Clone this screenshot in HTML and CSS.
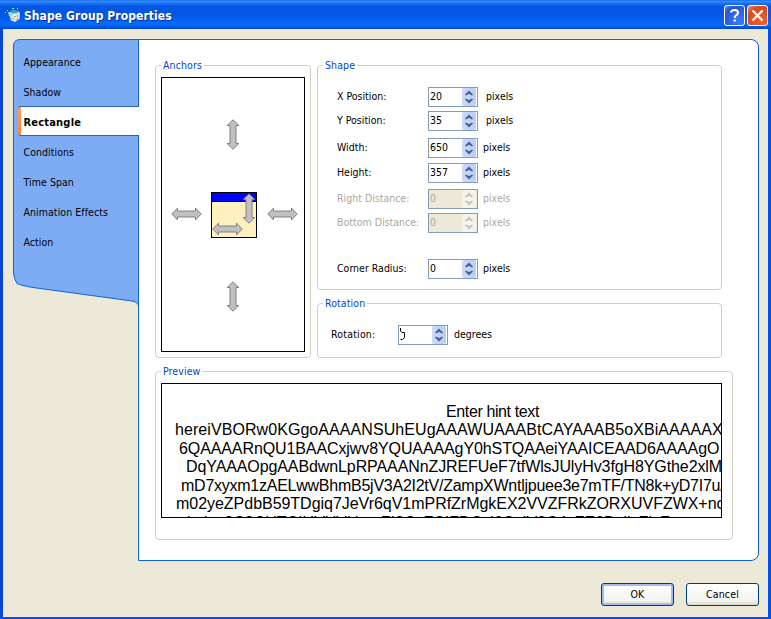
FILE: index.html
```html
<!DOCTYPE html>
<html lang="en">
<head>
<meta charset="utf-8">
<title>Shape Group Properties</title>
<link rel="stylesheet" href="styles.css">
</head>
<body>
<svg width="0" height="0" class="defs">
  <defs>
    <symbol id="arrow-v" viewBox="0 0 14 31"><path d="M7 .8 12.9 6.5H10V24.5H12.9L7 30.2 1.1 24.5H4V6.5H1.1Z" fill="#c0c0c0" stroke="#808080"/></symbol>
    <symbol id="arrow-h" viewBox="0 0 31 14"><path d="M.8 7 6.5 1.1V4H24.5V1.1L30.2 7 24.5 12.9V10H6.5V12.9Z" fill="#c0c0c0" stroke="#808080"/></symbol>
    <symbol id="spin" viewBox="0 0 14 18"><path d="M7 2.500 11 6.500 10 7.500 9 7 7 5.800 5 7 4 7.500 3 6.500ZM7 15.500 11 11.500 10 10.500 9 11 7 12.200 5 11 4 10.500 3 11.500Z" fill="currentColor"/></symbol>
  </defs>
</svg>
<div class="window">
  <header class="titlebar">
    <svg class="app-icon" width="16" height="16" viewBox="0 0 16 16"><path d="M4 5 9 6 14 4 15 7 14.500 12 10 15 6 13.500 5 10Z" fill="#e2e2e0"/><path d="M5 5 7 3H11L14 4.500 11 7 6 6.500Z" fill="#2ea6cc"/><path d="M3 5H6L8 7 6 10 4 9Z" fill="#8be0f2"/><path d="M8 7 12 6 9 9Z" fill="#fff"/><path d="M9 9h2v1H9zM12 8h1v2h-1zM7 11h2v1H7zM11 12h2v1h-2z" fill="#a4a6a6"/><path d="M0 5h1v1H0zM2 3h1v1H2zM7 1h2v1H7zM12 1h1v1h-1zM4 8h1v1H4z" fill="#b8dccf"/></svg>
    <h1>Shape Group Properties</h1>
    <button class="cap help"><svg width="21" height="21" viewBox="0 0 21 21"><path d="M7 7.500Q7.300 5 10.500 5 14 5 14 7.700 14 9.200 12 10.400 10.700 11.200 10.700 13" fill="none" stroke="#fff" stroke-width="2"/><path d="M9.600 14.500h2.200v2H9.600z" fill="#fff"/></svg></button>
    <button class="cap close"><svg width="21" height="21" viewBox="0 0 21 21"><path d="M5.500 5.500 15.500 15.500M15.500 5.500 5.500 15.500" stroke="#fff" stroke-width="2.300"/></svg></button>
  </header>
  <main>
    <nav>
      <svg class="nav-bg" width="126" height="268" viewBox="0 0 126 268"><path d="M125.500.5H6.500Q.5 1 .5 7V234Q1 240 4 244.500 8 246.500 20 248.500L119 262Q125 263 125.500 267Z" fill="#7eacf4" stroke="#0e62dc"/></svg>
      <a>Appearance</a><a>Shadow</a><a class="current">Rectangle</a><a>Conditions</a><a>Time Span</a><a>Animation Effects</a><a>Action</a>
    </nav>
    <section class="panel">
      <div class="top">
        <div class="group"><span class="legend">Anchors</span>
          <div class="canvas">
            <svg class="arrow n" width="14" height="31"><use href="#arrow-v"/></svg>
            <svg class="arrow w" width="31" height="14"><use href="#arrow-h"/></svg>
            <div class="shape"><div class="shape-bar"></div>
              <svg class="arrow iv" width="14" height="31"><use href="#arrow-v"/></svg>
              <svg class="arrow ih" width="31" height="14"><use href="#arrow-h"/></svg>
            </div>
            <svg class="arrow e" width="31" height="14"><use href="#arrow-h"/></svg>
            <svg class="arrow s" width="14" height="31"><use href="#arrow-v"/></svg>
          </div>
        </div>
        <div class="right">
          <div class="group fields"><span class="legend">Shape</span>
            <div class="row wide"><label>X Position:</label><div class="num"><span>20</span><svg class="spin"><use href="#spin"/></svg></div><em>pixels</em></div>
            <div class="row wide g4"><label>Y Position:</label><div class="num"><span>35</span><svg class="spin"><use href="#spin"/></svg></div><em>pixels</em></div>
            <div class="row g7"><label>Width:</label><div class="num"><span>650</span><svg class="spin"><use href="#spin"/></svg></div><em>pixels</em></div>
            <div class="row g5"><label>Height:</label><div class="num"><span>357</span><svg class="spin"><use href="#spin"/></svg></div><em>pixels</em></div>
            <div class="row g6 off"><label>Right Distance:</label><div class="num"><span>0</span><svg class="spin"><use href="#spin"/></svg></div><em>pixels</em></div>
            <div class="row g4 off"><label>Bottom Distance:</label><div class="num"><span>0</span><svg class="spin"><use href="#spin"/></svg></div><em>pixels</em></div>
            <div class="row g26"><label>Corner Radius:</label><div class="num"><span>0</span><svg class="spin"><use href="#spin"/></svg></div><em>pixels</em></div>
          </div>
          <div class="group rotation"><span class="legend">Rotation</span>
            <div class="row"><label>Rotation:</label><div class="num"><svg class="dial" width="8" height="14" viewBox="0 0 8 14"><path d="M.5 0V3L2 4.500H4.500V9.500L2.500 11.500H.5" fill="none" stroke="#000"/></svg><svg class="spin"><use href="#spin"/></svg></div><em>degrees</em></div>
          </div>
        </div>
      </div>
      <div class="group preview"><span class="legend">Preview</span>
        <div class="paper">
          <p class="l0">Enter hint text</p>
          <p class="l1">hereiVBORw0KGgoAAAANSUhEUgAAAWUAAABtCAYAAAB5oXBiAAAAAX</p>
          <p class="l2">6QAAAARnQU1BAACxjwv8YQUAAAAgY0hSTQAAeiYAAICEAAD6AAAAgO</p>
          <p class="l3">DqYAAAOpgAABdwnLpRPAAANnZJREFUeF7tfWlsJUlyHv3fgH8YGthe2xlMW</p>
          <p class="l4">mD7xyxm1zAELwwBhmB5jV3A2I2tV/ZampXWntljpuee3e7mTF/TN8k+yD7I7u/</p>
          <p class="l5">m02yeZPdbB59TDgiq7JeVr6qV1mPRfZrMgkEX2VVZFRkZORXUVFZWX+nc</p>
          <p class="l6">lyrley2C8CUTCIUVUVUyreFI2CcFCIFDCyl6CyIV8C4yFE6DyllyFlyF</p>
        </div>
      </div>
    </section>
  </main>
  <footer><button class="btn primary">OK</button><button class="btn">Cancel</button></footer>
</div>
</body>
</html>
```
FILE: styles.css
```css
* { box-sizing: border-box; margin: 0; }
body { width: 771px; height: 619px; overflow: hidden; background: #ece9d8; font-family: "DejaVu Sans Condensed", "DejaVu Sans", sans-serif; font-stretch: condensed; font-size: 10.5px; color: #000; }
.defs { position: absolute; }
.window { width: 771px; height: 619px; border: 3px solid #0050ea; border-top: 0; border-bottom-width: 2px; border-left-color: #0747dd; display: flex; flex-direction: column; }
.titlebar { flex: none; height: 29px; margin: 0 -3px; padding: 1px 3px 0 5px; display: flex; align-items: center; background: linear-gradient(#0a5cd8 0, #3a91ff 1px, #1c76f5 3px, #0458e2 6px, #0355e3 14px, #0468fd 23px, #0467fa 25px, #0046cf 29px); }
.app-icon { margin-right: 3px; }
h1 { flex: 1; font-size: 12px; line-height: 16px; letter-spacing: .08px; padding-top: 2px; color: #fff; text-shadow: 1px 1px #0a318c; }
.cap { width: 21px; height: 21px; padding: 0; margin-left: 2px; margin-top: 1px; border: 1px solid #fff; border-radius: 3px; overflow: hidden; }
.cap svg { display: block; margin: -1px; }
.help { background: radial-gradient(circle at 75% 80%, #3d79ff, #2457cf 75%, #6e92ec); }
.close { background: radial-gradient(circle at 70% 80%, #f0622d, #d84a20 70%, #ea9a82); }
main { display: flex; padding: 10px 0 0 10px; }
nav { position: relative; width: 125px; padding-top: 8px; }
.nav-bg { position: absolute; left: 0; top: 0; }
nav a { position: relative; display: block; height: 30px; line-height: 30px; padding-left: 10.5px; letter-spacing: .06px; }
nav .current { margin: -1px 0 1px 5px; width: 121px; padding-left: 5.5px; background: linear-gradient(#ffa060, #ff8038) left / 3px 100% no-repeat #fff; border: 1px solid #2a62b8; border-width: 1px 0; line-height: 31px; border-radius: 3px 0 0 3px; font-weight: bold; font-size: 11px; letter-spacing: .2px; z-index: 2; }
.panel { width: 621px; height: 522px; padding: 25px 0 0 16px; background: #fff; border: 1px solid #0e62dc; border-radius: 0 8px 8px 0; }
.top { display: flex; gap: 6px; height: 293px; }
.group { position: relative; width: 156px; border: 1px solid #d0d0bf; border-radius: 4px; }
.legend { position: absolute; top: -8px; left: 5px; padding: 0 2px; background: #fff; color: #0046d5; line-height: 14px; letter-spacing: .1px; white-space: nowrap; }
.canvas { position: relative; margin: 11px 5px; width: 144px; height: 275px; border: 1px solid #000; }
.arrow { position: absolute; }
.n { left: 64px; top: 41px; }
.s { left: 64px; top: 203px; }
.w { left: 9px; top: 129px; }
.e { left: 105px; top: 129px; }
.shape { position: absolute; left: 49px; top: 114px; width: 46px; height: 46px; border: 1px solid #000; background: #fff0c0; }
.shape-bar { height: 9px; background: #00f; border-bottom: 1px solid #000; }
.iv { left: 30px; top: 0; }
.ih { left: 0; top: 29px; }
.right { display: flex; flex-direction: column; gap: 13px; }
.fields, .rotation { width: 405px; padding: 21px 0 0 19px; height: 225px; }
.rotation { height: 55px; padding-left: 13px; }
.row { display: flex; height: 20px; line-height: 19px; }
.row label { width: 91px; white-space: nowrap; }
.rotation label { width: 67px; letter-spacing: .2px; }
.row em { font-style: normal; margin-left: 5px; }
.wide em { margin-left: 8px; }
.rotation em { margin-left: 6px; }
.g4 { margin-top: 4px; } .g5 { margin-top: 5px; } .g6 { margin-top: 6px; } .g7 { margin-top: 7px; } .g26 { margin-top: 26px; }
.num { width: 50px; height: 20px; border: 1px solid #7f9db9; background: #fff; display: flex; justify-content: space-between; line-height: 17px; padding-left: 1px; }
.spin { width: 14px; height: 18px; margin-right: 1px; color: #4d6185; background: linear-gradient(90deg, #ccdafd, #b8cbfa); border-radius: 2px; }
.dial { margin-top: 2px; }
.off { color: #aca899; }
.off .num { background: #ece9d8; }
.off .spin { color: #c6c4b8; background: #f4f3ec; }
.preview { width: 578px; height: 169px; margin-top: 13px; }
.paper { width: 561px; height: 135px; margin: 11px 5px; border: 1px solid #000; overflow: hidden; padding-top: 19px; font: 16px/18.4px "Liberation Sans", sans-serif; font-stretch: normal; white-space: nowrap; }
.l0 { padding-left: 284px; letter-spacing: -.38px; }
.l1 { padding-left: 13px; letter-spacing: .07px; }
.l2 { padding-left: 17px; letter-spacing: -.1px; }
.l3 { padding-left: 24px; letter-spacing: -.1px; }
.l4 { padding-left: 19px; letter-spacing: -.25px; }
.l5 { padding-left: 14px; letter-spacing: -.03px; }
.l6 { padding-left: 25px; padding-top: 1px; }
footer { display: flex; justify-content: flex-end; gap: 12px; padding: 22px 9px 0 0; }
.btn { width: 73px; height: 23px; padding: 0 0 1px; border: 1px solid #003c74; border-radius: 3px; background: linear-gradient(#fff, #f3f3ef 80%, #dcd8cb); font: inherit; letter-spacing: .15px; color: #000; }
.primary { box-shadow: inset 0 0 0 2px #a2bdf0, inset 0 2px #cee2ff, inset 0 -2px #6982ee; }
```
